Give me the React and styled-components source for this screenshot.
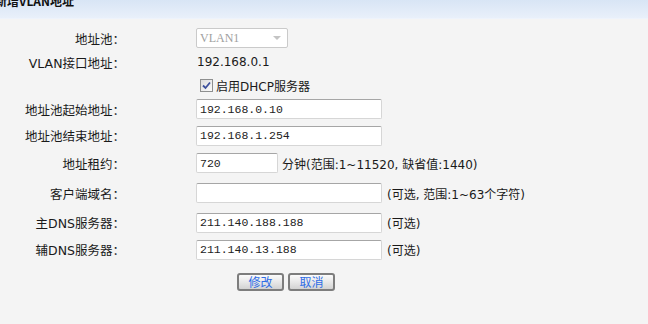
import styled, { createGlobalStyle } from "styled-components";

const GlobalStyle = createGlobalStyle`
  html, body {
    margin: 0;
    padding: 0;
    background: #f4f4f4;
  }
  body {
    font-family: "DejaVu Sans", "Noto Sans CJK SC", sans-serif;
    font-size: 12px;
    color: #1a1a1a;
  }
`;

const Page = styled.div`
  width: 648px;
  height: 324px;
  overflow: hidden;
  background: #f4f4f4;
`;

const Header = styled.div`
  height: 18px;
  overflow: hidden;
  background: linear-gradient(to bottom, #d8e5f5, #e9f0fa);
  border-bottom: 1px solid #eef3fb;
`;

const Title = styled.div`
  margin: -6px 0 0 -5px;
  font-family: "Noto Sans CJK SC", sans-serif;
  font-weight: bold;
  font-size: 12px;
  line-height: 14px;
  color: #111;
`;

const Form = styled.div`
  padding-top: 7px;
`;

const Row = styled.div`
  display: grid;
  grid-template-columns: 125px 1fr;
  column-gap: 71px;
  align-items: center;
  height: ${(p) => p.$h}px;
`;

const Label = styled.div`
  text-align: right;
  font-size: 12.5px;
  white-space: nowrap;
`;

const Field = styled.div`
  display: flex;
  align-items: center;
  gap: ${(p) => p.$gap ?? 4}px;
  white-space: nowrap;
`;

const TextInput = styled.input`
  box-sizing: border-box;
  width: ${(p) => p.$w}px;
  height: 20px;
  margin: 0;
  padding: 0 3px;
  background: #fff;
  border: 1px solid #d6d6d6;
  border-top-color: #a6a6a6;
  border-radius: 2px;
  font-family: "Liberation Mono", monospace;
  font-size: 11.5px;
  color: #222;
  outline: none;
`;

const Select = styled.div`
  box-sizing: border-box;
  width: 92px;
  height: 20px;
  display: flex;
  align-items: center;
  justify-content: space-between;
  padding: 0 6px 0 3px;
  background: #fff;
  border: 1px solid #cacaca;
  border-radius: 2px;
  font-family: "Liberation Serif", serif;
  font-size: 12px;
  color: #a0a0a0;
`;

const Arrow = styled.span`
  width: 0;
  height: 0;
  border-left: 4px solid transparent;
  border-right: 4px solid transparent;
  border-top: 4px solid #c4c4c4;
`;

const Value = styled.span`
  padding-left: 1px;
`;

const Hint = styled.span`
  color: #1a1a1a;
`;

const CheckBox = styled.span`
  box-sizing: border-box;
  width: 13px;
  height: 13px;
  margin-left: 4px;
  display: inline-flex;
  align-items: center;
  justify-content: center;
  border: 1px solid #8e8f8f;
  background: linear-gradient(135deg, #dcdcdc, #fbfbfb);
`;

const Buttons = styled.div`
  display: flex;
  gap: 4px;
  margin: 10px 0 0 237px;
`;

const Button = styled.button`
  box-sizing: border-box;
  width: 47px;
  height: 18px;
  padding: 0;
  border: 2px solid #7d7d7d;
  border-radius: 3px;
  background: linear-gradient(to bottom, #fbfbfb, #e6e6e6 55%, #d2d2d2);
  font-family: "Noto Sans CJK SC", sans-serif;
  font-size: 12px;
  line-height: 14px;
  color: #2f6de6;
`;

const rows = [
  { label: "地址池起始地址：", value: "192.168.0.10", h: 26 },
  { label: "地址池结束地址：", value: "192.168.1.254", h: 27 },
];

export default function App() {
  return (
    <Page>
      <GlobalStyle />
      <Header>
        <Title>新增VLAN地址</Title>
      </Header>
      <Form>
        <Row $h={24}>
          <Label>地址池：</Label>
          <Field>
            <Select>
              VLAN1
              <Arrow />
            </Select>
          </Field>
        </Row>
        <Row $h={24}>
          <Label>VLAN接口地址：</Label>
          <Field>
            <Value>192.168.0.1</Value>
          </Field>
        </Row>
        <Row $h={22}>
          <span />
          <Field $gap={3}>
            <CheckBox>
              <svg width="9" height="9" viewBox="0 0 9 9">
                <path d="M1 4.5 L3.5 7 L8 1.5" fill="none" stroke="#3c4f9c" strokeWidth="1.8" />
              </svg>
            </CheckBox>
            启用DHCP服务器
          </Field>
        </Row>
        {rows.map((r) => (
          <Row $h={r.h} key={r.label}>
            <Label>{r.label}</Label>
            <Field>
              <TextInput $w={186} defaultValue={r.value} />
            </Field>
          </Row>
        ))}
        <Row $h={28}>
          <Label>地址租约：</Label>
          <Field>
            <TextInput $w={82} defaultValue="720" />
            <Hint>分钟(范围:1~11520, 缺省值:1440)</Hint>
          </Field>
        </Row>
        <Row $h={32}>
          <Label>客户端域名：</Label>
          <Field $gap={5}>
            <TextInput $w={186} defaultValue="" />
            <Hint>(可选, 范围:1~63个字符)</Hint>
          </Field>
        </Row>
        <Row $h={27}>
          <Label>主DNS服务器：</Label>
          <Field $gap={5}>
            <TextInput $w={186} defaultValue="211.140.188.188" />
            <Hint>(可选)</Hint>
          </Field>
        </Row>
        <Row $h={27}>
          <Label>辅DNS服务器：</Label>
          <Field $gap={5}>
            <TextInput $w={186} defaultValue="211.140.13.188" />
            <Hint>(可选)</Hint>
          </Field>
        </Row>
        <Buttons>
          <Button>修改</Button>
          <Button>取消</Button>
        </Buttons>
      </Form>
    </Page>
  );
}
